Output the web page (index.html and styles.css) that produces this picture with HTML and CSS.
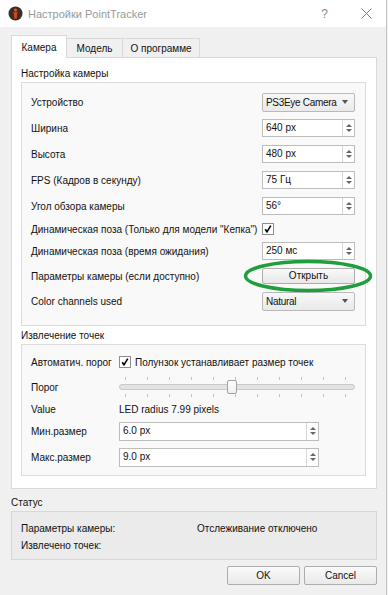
FILE: index.html
```html
<!DOCTYPE html>
<html lang="ru">
<head>
  <meta charset="UTF-8">
  <meta name="viewport" content="width=device-width, initial-scale=1.0">
  <title>Настройки PointTracker</title>
  <link rel="stylesheet" href="styles.css">
</head>
<body>
  <div class="window">
    <div class="titlebar">
      <svg class="app-icon" width="15" height="15" viewBox="0 0 15 15">
        <circle cx="7.5" cy="7.5" r="7" fill="#3b2c25"/>
        <circle cx="7.5" cy="4" r="1.6" fill="#e2542b"/>
        <path d="M5 6.3h5l-1.1 1.6v4.6h-2.8v-4.6z" fill="#d64a20"/>
      </svg>
      <span class="title">Настройки PointTracker</span>
      <span class="tb-help">?</span>
      <svg class="tb-close" width="11" height="11" viewBox="0 0 11 11">
        <path d="M0.5 0.5L10.5 10.5M10.5 0.5L0.5 10.5" stroke="#7a7a7a" stroke-width="1"/>
      </svg>
    </div>

    <div class="main">
      <div class="tabs">
        <div class="tab active">Камера</div>
        <div class="tab">Модель</div>
        <div class="tab wide">О программе</div>
      </div>

      <div class="pane">
        <div class="group-title">Настройка камеры</div>
        <div class="group cam">
          <div class="row">
            <span class="label">Устройство</span>
            <div class="ctl combo"><span class="combo-text">PS3Eye Camera</span><i class="arrow"></i></div>
          </div>
          <div class="row">
            <span class="label">Ширина</span>
            <div class="ctl spin"><span class="val">640 px</span><span class="spin-btns"><i class="up"></i><i class="down"></i></span></div>
          </div>
          <div class="row">
            <span class="label">Высота</span>
            <div class="ctl spin"><span class="val">480 px</span><span class="spin-btns"><i class="up"></i><i class="down"></i></span></div>
          </div>
          <div class="row">
            <span class="label">FPS (Кадров в секунду)</span>
            <div class="ctl spin"><span class="val">75 Гц</span><span class="spin-btns"><i class="up"></i><i class="down"></i></span></div>
          </div>
          <div class="row">
            <span class="label">Угол обзора камеры</span>
            <div class="ctl spin"><span class="val">56°</span><span class="spin-btns"><i class="up"></i><i class="down"></i></span></div>
          </div>
          <div class="row check">
            <span class="label">Динамическая поза (Только для модели "Кепка")</span>
            <div class="ctl flat"><span class="checkbox"><svg width="10" height="10" viewBox="0 0 10 10"><path d="M2.2 5.2L4 7.8L7.8 1.6" fill="none" stroke="#000" stroke-width="1.6"/></svg></span></div>
          </div>
          <div class="row short">
            <span class="label">Динамическая поза (время ожидания)</span>
            <div class="ctl spin"><span class="val">250 мс</span><span class="spin-btns"><i class="up"></i><i class="down"></i></span></div>
          </div>
          <div class="row">
            <span class="label">Параметры камеры (если доступно)</span>
            <div class="ctl button">Открыть</div>
          </div>
          <div class="row short">
            <span class="label">Color channels used</span>
            <div class="ctl combo"><span class="combo-text">Natural</span><i class="arrow"></i></div>
          </div>
        </div>

        <div class="group-title">Извлечение точек</div>
        <div class="group ext">
          <div class="row r22">
            <span class="label">Автоматич. порог</span>
            <span class="checkbox"><svg width="10" height="10" viewBox="0 0 10 10"><path d="M2.2 5.2L4 7.8L7.8 1.6" fill="none" stroke="#000" stroke-width="1.6"/></svg></span>
            <span class="check-text">Полунзок устанавливает размер точек</span>
          </div>
          <div class="row r28">
            <span class="label">Порог</span>
            <div class="slider">
              <div class="ticks"><i></i><i></i><i></i><i></i><i></i><i></i><i></i><i></i><i></i><i></i><i></i></div>
              <div class="groove"><span class="handle"></span></div>
              <div class="ticks"><i></i><i></i><i></i><i></i><i></i><i></i><i></i><i></i><i></i><i></i><i></i></div>
            </div>
          </div>
          <div class="row r16">
            <span class="label">Value</span>
            <span>LED radius 7.99 pixels</span>
          </div>
          <div class="row r28">
            <span class="label">Мин.размер</span>
            <div class="spin long"><span class="val">6.0 px</span><span class="spin-btns"><i class="up"></i><i class="down"></i></span></div>
          </div>
          <div class="row short">
            <span class="label">Макс.размер</span>
            <div class="spin long"><span class="val">9.0 px</span><span class="spin-btns"><i class="up"></i><i class="down"></i></span></div>
          </div>
        </div>
      </div>

      <div class="status-title">Статус</div>
      <div class="status">
        <span>Параметры камеры:</span>
        <span>Отслеживание отключено</span>
        <span>Извлечено точек:</span>
        <span></span>
      </div>

      <div class="actions">
        <div class="btn">OK</div>
        <div class="btn">Cancel</div>
      </div>
    </div>

    <svg class="mark" width="132" height="36" viewBox="0 0 132 36">
      <ellipse cx="65" cy="17" rx="62.5" ry="14.5" fill="none" stroke="#1f9f3c" stroke-width="3.5"/>
    </svg>
  </div>
</body>
</html>
```

FILE: styles.css
```css
* {
  box-sizing: border-box;
}
body {
  margin: 0;
  background: #f0f0f0;
  font-family: "Liberation Sans", Arial, sans-serif;
  font-size: 10px;
  color: #111;
}
.window {
  position: relative;
  width: 387px;
  height: 595px;
  border-right: 1px solid #c6c6c6;
}

/* title bar */
.titlebar {
  height: 27px;
  background: #fff;
  display: flex;
  align-items: center;
  padding-left: 8px;
}
.app-icon {
  margin-right: 5px;
}
.title {
  flex: 1;
  color: #999;
  font-size: 11px;
}
.tb-help {
  color: #8a8a8a;
  font-size: 12px;
  margin-right: 33px;
}
.tb-close {
  margin-right: 14px;
}

.main {
  padding: 8px 9px 0 11px;
}

/* tabs */
.tabs {
  display: flex;
  align-items: flex-start;
  height: 22px;
}
.tab {
  width: 57px;
  height: 19px;
  margin-top: 3px;
  border: 1px solid #d9d9d9;
  border-bottom: 0;
  background: #f0f0f0;
  text-align: center;
  line-height: 19px;
}
.tab + .tab {
  margin-left: -1px;
}
.tab.wide {
  width: 78px;
}
.tab.active {
  width: 56px;
  height: 23px;
  margin-top: 0;
  background: #fff;
  position: relative;
  z-index: 1;
  line-height: 23px;
}

.pane {
  border: 1px solid #d9d9d9;
  background: #fff;
  padding: 7px 10px 12px 9px;
}
.group-title {
  height: 17px;
  line-height: 17px;
}
.group {
  border: 1px solid #dcdcdc;
  background: #f9f9f9;
  padding: 6px 10px 12px 9px;
  margin-bottom: 1px;
}
.group.ext {
  padding: 6px 10px 6px 9px;
  margin-bottom: 0;
}

.row {
  display: flex;
  align-items: center;
  height: 26px;
}
.row.check { height: 20px; }
.row.short { height: 24px; }
.row.r22 { height: 22px; }
.row.r28 { height: 28px; }
.row.r16 { height: 16px; }
.cam .label {
  flex: 1;
}
.ext .label {
  flex: none;
  width: 88px;
}

/* controls */
.ctl {
  width: 93px;
  height: 18px;
}
.ctl.flat {
  display: flex;
  align-items: center;
}
.combo {
  display: flex;
  align-items: center;
  justify-content: space-between;
  height: 19px;
  padding: 0 6px 0 3px;
  border: 1px solid #b9b9b9;
  border-radius: 2px;
  background: linear-gradient(#f8f8f8, #e9e9e9);
}
.combo-text {
  letter-spacing: -0.3px;
}
.arrow {
  border-left: 3.5px solid transparent;
  border-right: 3.5px solid transparent;
  border-top: 4px solid #555;
}
.spin {
  display: flex;
  border: 1px solid #bdbdbd;
  background: #fff;
}
.spin.long {
  width: 200px;
  height: 19px;
}
.spin .val {
  flex: 1;
  padding-left: 3px;
  line-height: 16px;
}
.spin-btns {
  width: 12px;
  border-left: 1px solid #d6d6d6;
  display: flex;
  flex-direction: column;
  justify-content: center;
  align-items: center;
  gap: 2px;
}
.up {
  border-left: 3px solid transparent;
  border-right: 3px solid transparent;
  border-bottom: 3.5px solid #666;
}
.down {
  border-left: 3px solid transparent;
  border-right: 3px solid transparent;
  border-top: 3.5px solid #666;
}
.button {
  height: 16px;
  border: 1px solid #adadad;
  border-radius: 2px;
  background: linear-gradient(#f9f9f9, #e8e8e8);
  text-align: center;
  line-height: 14px;
}
.checkbox {
  width: 12px;
  height: 12px;
  border: 1px solid #8e8e8e;
  background: #fff;
  display: flex;
  align-items: center;
  justify-content: center;
}
.check-text {
  margin-left: 4px;
}

/* slider */
.slider {
  width: 236px;
  height: 20px;
}
.ticks {
  display: flex;
  justify-content: space-between;
  height: 3px;
  padding: 0 9px 0 6px;
}
.ticks i {
  width: 1px;
  background: #c2c2c2;
}
.groove {
  position: relative;
  height: 6px;
  margin: 4px 0;
  border: 1px solid #c9c9c9;
  border-radius: 3px;
  background: #e3e3e3;
}
.handle {
  position: absolute;
  left: 107px;
  top: -5px;
  width: 10px;
  height: 14px;
  border: 1px solid #a2a2a2;
  border-radius: 2px;
  background: linear-gradient(#ffffff, #efefef);
}

/* status */
.status-title {
  margin-top: 5px;
  height: 17px;
  line-height: 17px;
}
.status {
  display: grid;
  grid-template-columns: 176px 1fr;
  line-height: 17px;
  padding: 8px 9px 5px;
  border: 1px solid #d7d7d7;
  background: #ebebeb;
}

.actions {
  display: flex;
  justify-content: flex-end;
  gap: 4px;
  margin-top: 6px;
}
.btn {
  width: 73px;
  height: 19px;
  border: 1px solid #adadad;
  border-radius: 2px;
  background: linear-gradient(#fafafa, #e9e9e9);
  text-align: center;
  line-height: 17px;
}

/* annotation drawn over the dialog */
.mark {
  position: absolute;
  left: 243px;
  top: 259px;
}
```
